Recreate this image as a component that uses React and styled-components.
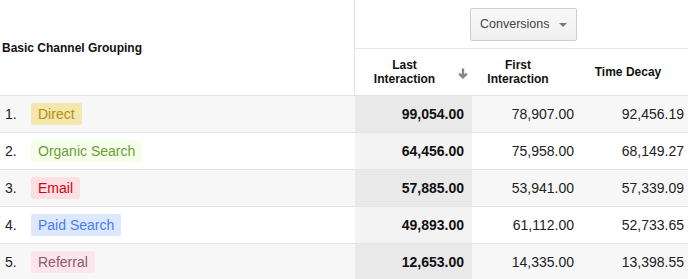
import React from "react";
import styled, { createGlobalStyle } from "styled-components";

const rows = [
  { label: "Direct", tone: "direct", last: "99,054.00", first: "78,907.00", decay: "92,456.19" },
  { label: "Organic Search", tone: "organic", last: "64,456.00", first: "75,958.00", decay: "68,149.27" },
  { label: "Email", tone: "email", last: "57,885.00", first: "53,941.00", decay: "57,339.09" },
  { label: "Paid Search", tone: "paid", last: "49,893.00", first: "61,112.00", decay: "52,733.65" },
  { label: "Referral", tone: "referral", last: "12,653.00", first: "14,335.00", decay: "13,398.55" },
];

const tones = {
  direct: { bg: "#f4e6ae", fg: "#b39100" },
  organic: { bg: "#f6feec", fg: "#6a9e34" },
  email: { bg: "#ffe0e2", fg: "#d0021b" },
  paid: { bg: "#dce8ff", fg: "#4a7cf5" },
  referral: { bg: "#fde5ed", fg: "#8a5c6b" },
};

const Global = createGlobalStyle`
  body {
    margin: 0;
    background: #fff;
    overflow: hidden;
    font-family: "Liberation Sans", Arial, sans-serif;
  }
`;

const Table = styled.div`
  width: 692px;
  display: grid;
  grid-template-columns: 355px 117px 110px 110px;
  color: #222;
`;

const GroupHead = styled.div`
  grid-row: 1 / span 2;
  grid-column: 1;
  display: flex;
  align-items: center;
  padding-left: 2px;
  border-right: 1px solid #e2e2e2;
  border-bottom: 1px solid #e2e2e2;
  font-size: 12px;
  font-weight: bold;
  color: #111;
`;

const MetricBar = styled.div`
  grid-column: 2 / span 3;
  height: 49px;
  box-sizing: border-box;
  border-bottom: 1px solid #e6e6e6;
  display: flex;
  align-items: center;
  justify-content: center;
`;

const Select = styled.button`
  height: 33px;
  width: 107px;
  box-sizing: border-box;
  display: flex;
  align-items: center;
  justify-content: space-between;
  padding: 0 9px 0 9px;
  border: 1px solid #cdcdcd;
  border-radius: 2px;
  background: linear-gradient(#f8f8f8, #f0f0f0);
  font-family: inherit;
  font-size: 12.5px;
  color: #444;
`;

const Caret = styled.span`
  width: 0;
  height: 0;
  border-left: 4px solid transparent;
  border-right: 4px solid transparent;
  border-top: 4px solid #777;
  margin-top: 1px;
`;

const HeadCell = styled.div`
  height: 47px;
  box-sizing: border-box;
  border-bottom: 1px solid #e2e2e2;
  display: flex;
  align-items: center;
  padding: 0 4px 0 8px;
  font-size: 12px;
  font-weight: bold;
  line-height: 14px;
  color: #111;
`;

const HeadLabel = styled.span`
  flex: 1;
  text-align: center;
`;

const SortSlot = styled.span`
  width: 22px;
  display: flex;
  justify-content: flex-end;
  padding-top: 2px;
`;

const Row = styled.div`
  display: contents;
`;

const Cell = styled.div`
  height: 37px;
  box-sizing: border-box;
  border-bottom: 1px solid #e3e3e3;
  display: flex;
  align-items: center;
  font-size: 14px;
  background: ${(p) =>
    p.$sorted ? (p.$odd ? "#e9e9e9" : "#f3f3f3") : p.$odd ? "#f7f7f7" : "#fff"};
`;

const NameCell = styled(Cell)`
  padding-left: 5px;
`;

const Rank = styled.span`
  width: 26px;
`;

const Badge = styled.span`
  height: 22px;
  line-height: 22px;
  padding: 0 7px;
  border-radius: 2px;
  background: ${(p) => tones[p.$tone].bg};
  color: ${(p) => tones[p.$tone].fg};
`;

const NumCell = styled(Cell)`
  justify-content: flex-end;
  padding-right: 8px;
  font-weight: ${(p) => (p.$sorted ? "bold" : "normal")};
  color: ${(p) => (p.$sorted ? "#111" : "#222")};
`;

const SortArrow = () => (
  <svg width="10" height="11" viewBox="0 0 10 11" fill="none">
    <path d="M5 0.5V9.5M1.2 5.6L5 9.4L8.8 5.6" stroke="#858585" strokeWidth="2.4" />
  </svg>
);

export default function App() {
  return (
    <>
      <Global />
      <Table>
        <GroupHead>Basic Channel Grouping</GroupHead>
        <MetricBar>
          <Select>
            Conversions
            <Caret />
          </Select>
        </MetricBar>
        <HeadCell>
          <HeadLabel>Last Interaction</HeadLabel>
          <SortSlot>
            <SortArrow />
          </SortSlot>
        </HeadCell>
        <HeadCell>
          <HeadLabel>First Interaction</HeadLabel>
          <SortSlot />
        </HeadCell>
        <HeadCell>
          <HeadLabel>Time Decay</HeadLabel>
          <SortSlot />
        </HeadCell>
        {rows.map((r, i) => {
          const odd = i % 2 === 0;
          return (
            <Row key={r.label}>
              <NameCell $odd={odd}>
                <Rank>{i + 1}.</Rank>
                <Badge $tone={r.tone}>{r.label}</Badge>
              </NameCell>
              <NumCell $odd={odd} $sorted>
                {r.last}
              </NumCell>
              <NumCell $odd={odd}>{r.first}</NumCell>
              <NumCell $odd={odd}>{r.decay}</NumCell>
            </Row>
          );
        })}
      </Table>
    </>
  );
}
